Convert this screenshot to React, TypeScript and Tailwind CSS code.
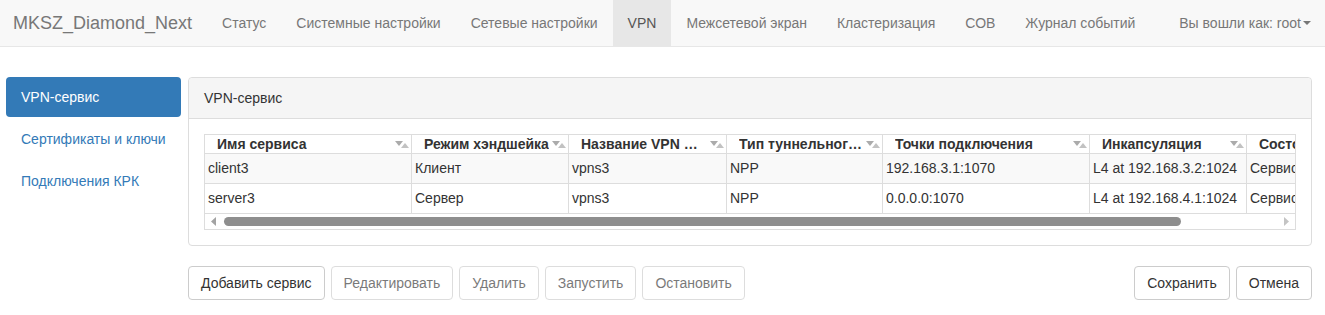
const navItems = [
  'Статус',
  'Системные настройки',
  'Сетевые настройки',
  'VPN',
  'Межсетевой экран',
  'Кластеризация',
  'СОВ',
  'Журнал событий',
];

const sideItems = ['VPN-сервис', 'Сертификаты и ключи', 'Подключения КРК'];

const columns = [
  { title: 'Имя сервиса', w: 207 },
  { title: 'Режим хэндшейка', w: 157 },
  { title: 'Название VPN …', w: 158 },
  { title: 'Тип туннельног…', w: 156 },
  { title: 'Точки подключения', w: 207 },
  { title: 'Инкапсуляция', w: 157 },
  { title: 'Состояние', w: 157 },
];

const rows = [
  ['client3', 'Клиент', 'vpns3', 'NPP', '192.168.3.1:1070', 'L4 at 192.168.3.2:1024', 'Сервис запущен'],
  ['server3', 'Сервер', 'vpns3', 'NPP', '0.0.0.0:1070', 'L4 at 192.168.4.1:1024', 'Сервис запущен'],
];

const SortIcon = () => (
  <svg width="14" height="9" viewBox="0 0 14 9" className="shrink-0">
    <polygon points="0,1 8,1 4,6" fill="#ababab" />
    <polygon points="6,8 14,8 10,3" fill="#c2c2c2" />
  </svg>
);

const Btn = ({ label, disabled }: { label: string; disabled?: boolean }) => (
  <button
    className={
      'h-[34px] px-3 border border-[#ccc] rounded bg-white text-[14px] text-[#333] ' +
      (disabled ? 'opacity-[0.65]' : '')
    }
  >
    {label}
  </button>
);

export default function App() {
  return (
    <div className="w-[1325px] h-[315px] bg-white overflow-hidden font-['Liberation_Sans',Arial,sans-serif] text-[14px] text-[#333]">
      {/* Navbar */}
      <div className="h-[47px] bg-[#f8f8f8] border-b border-[#e7e7e7] flex items-stretch">
        <div className="pl-[13px] pr-[15px] flex items-center text-[18px] text-[#777]">MKSZ_Diamond_Next</div>
        {navItems.map((item) => (
          <div
            key={item}
            className={
              'px-[15px] flex items-center ' +
              (item === 'VPN' ? 'bg-[#e7e7e7] text-[#555]' : 'text-[#777]')
            }
          >
            {item}
          </div>
        ))}
        <div className="ml-auto pr-[14px] flex items-center text-[#777]">
          Вы вошли как: root
          <span className="ml-[2px] inline-block w-0 h-0 border-l-[4px] border-r-[4px] border-t-[4px] border-l-transparent border-r-transparent border-t-[#777]" />
        </div>
      </div>

      {/* Content */}
      <div className="flex pt-[30px] pl-[6px] pr-[13px] gap-[7px]">
        <div className="w-[175px] flex flex-col gap-[2px]">
          {sideItems.map((s, i) => (
            <div
              key={s}
              className={
                'h-[40px] px-[15px] flex items-center rounded ' +
                (i === 0 ? 'bg-[#337ab7] text-white' : 'text-[#337ab7]')
              }
            >
              {s}
            </div>
          ))}
        </div>

        <div className="flex-1 min-w-0 flex flex-col">
          <div className="border border-[#ddd] rounded">
            <div className="h-[41px] px-[15px] flex items-center bg-[#f5f5f5] border-b border-[#ddd] rounded-t">
              VPN-сервис
            </div>
            <div className="px-[15px] pt-[15px] pb-[15px]">
              <div className="border border-[#ddd] overflow-hidden">
                <div className="flex">
                  {columns.map((c) => (
                    <div
                      key={c.title}
                      style={{ width: c.w }}
                      className="h-[19px] shrink-0 border-r border-b border-[#ddd] pl-[12px] pr-[2px] flex items-center justify-between font-bold whitespace-nowrap overflow-hidden"
                    >
                      <span className="overflow-hidden">{c.title}</span>
                      <SortIcon />
                    </div>
                  ))}
                </div>
                {rows.map((r, ri) => (
                  <div key={ri} className={'flex ' + (ri === 0 ? 'bg-[#f9f9f9]' : 'bg-white')}>
                    {r.map((cell, ci) => (
                      <div
                        key={ci}
                        style={{ width: columns[ci].w }}
                        className="h-[30px] shrink-0 border-r border-b border-[#ddd] px-[3px] flex items-center whitespace-nowrap overflow-hidden"
                      >
                        {cell}
                      </div>
                    ))}
                  </div>
                ))}
                {/* Horizontal scrollbar */}
                <div className="h-[15px] flex items-center bg-white px-[5px]">
                  <svg width="8" height="9" viewBox="0 0 8 9">
                    <polygon points="6,0 6,9 1,4.5" fill="#a3a3a3" />
                  </svg>
                  <div className="ml-[6px] w-[957px] h-[9px] rounded-full bg-[#8e8e8e]" />
                  <div className="flex-1" />
                  <svg width="8" height="9" viewBox="0 0 8 9">
                    <polygon points="2,0 2,9 7,4.5" fill="#c4c4c4" />
                  </svg>
                </div>
              </div>
            </div>
          </div>

          <div className="mt-[20px] flex gap-[6px]">
            <Btn label="Добавить сервис" />
            <Btn label="Редактировать" disabled />
            <Btn label="Удалить" disabled />
            <Btn label="Запустить" disabled />
            <Btn label="Остановить" disabled />
            <div className="flex-1" />
            <Btn label="Сохранить" />
            <Btn label="Отмена" />
          </div>
        </div>
      </div>
    </div>
  );
}
